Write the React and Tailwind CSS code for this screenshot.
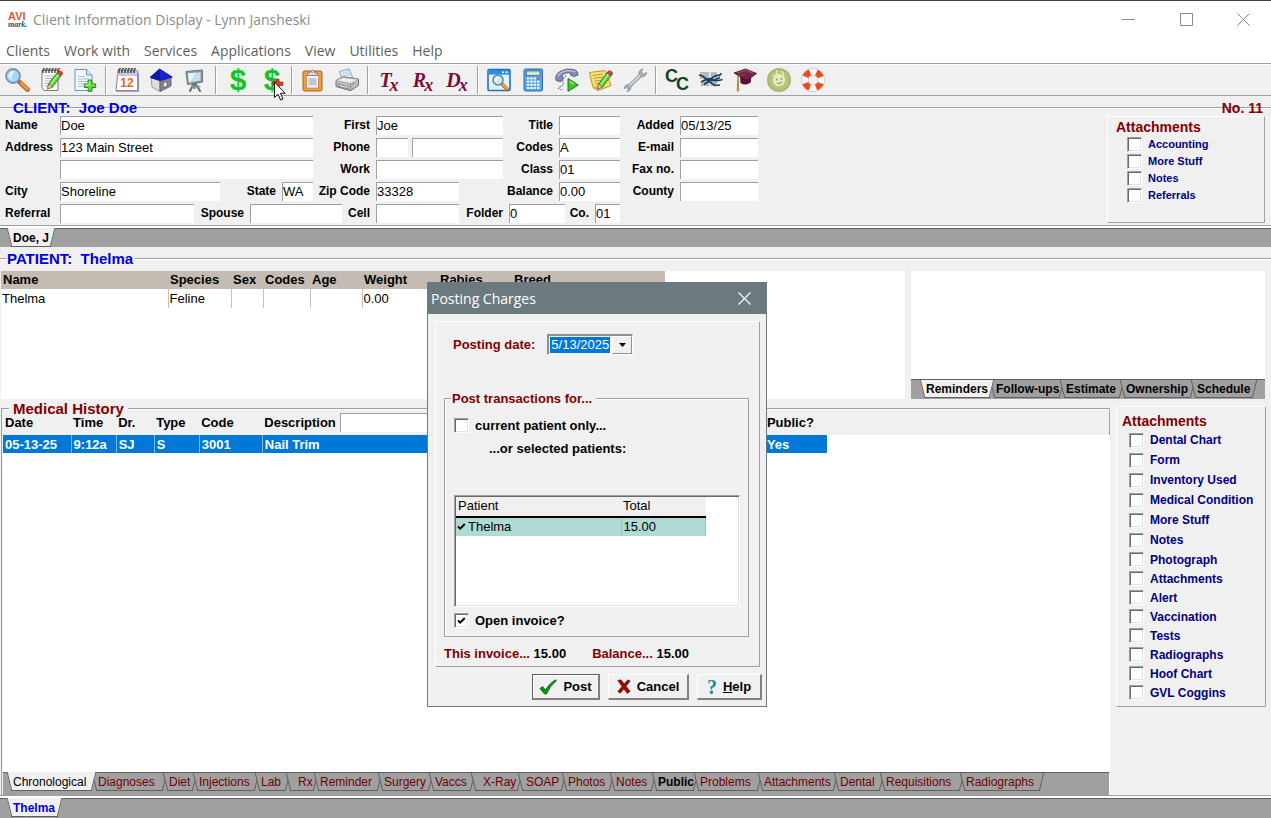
import React from "react";

const sunken = "border-t border-l border-[#a0a0a0] bg-white";
const raised = "border border-t-white border-l-white border-r-[#a0a0a0] border-b-[#a0a0a0]";

/* ---------- toolbar drawings ---------- */

function Icon({ children }) {
  return (
    <svg width="26" height="26" viewBox="0 0 26 26" aria-hidden="true">
      {children}
    </svg>
  );
}

function Pencil() {
  return (
    <g>
      <path d="M10.5 17 L19 5.8 L23 8.8 L14.6 20 L9.6 22 Z" fill="#5fd13c" stroke="#2f7d1c" strokeWidth="0.9" />
      <path d="M12.8 17.6 L20.6 7.2" stroke="#b8f09a" strokeWidth="1.3" />
      <path d="M19 5.8 L20.4 4 Q24.4 3.4 24.5 7 L23 8.8 Z" fill="#e0433a" stroke="#9b2a22" strokeWidth="0.8" />
      <path d="M10.5 17 L14.6 20 L9.6 22 Z" fill="#f3cf9b" stroke="#73562c" strokeWidth="0.6" />
    </g>
  );
}

function Lens({ big }) {
  return big ? (
    <g>
      <path d="M15.5 15 L23.5 22.5" stroke="#a85a1a" strokeWidth="4.6" strokeLinecap="round" />
      <path d="M16.2 15.2 L23.3 22" stroke="#f39a43" strokeWidth="2.8" strokeLinecap="round" />
      <path d="M13.8 13.8 L16 16" stroke="#777" strokeWidth="2.2" />
      <circle cx="9" cy="9" r="7" fill="#a9d6f2" stroke="#7b97a6" strokeWidth="1.8" />
      <path d="M4.5 9 A4.6 4.6 0 0 1 10.5 4.6 Q7 8 8 13 Q4.8 12 4.5 9Z" fill="#e2f3fc" />
    </g>
  ) : (
    <g>
      <path d="M16 17 L21.5 22.5" stroke="#b5621f" strokeWidth="3.6" strokeLinecap="round" />
      <path d="M16.6 17.2 L21.2 21.8" stroke="#f7a44d" strokeWidth="2" strokeLinecap="round" />
      <circle cx="12" cy="13" r="5" fill="#c8e8fa" stroke="#5f8396" strokeWidth="1.5" />
      <path d="M9 13 A3 3 0 0 1 13 10 L10 15 Z" fill="#fff" />
    </g>
  );
}

const Binding = ({ y = 4, color = "#333" }) => (
  <g fill="none" stroke={color} strokeWidth="1.2">
    {[5, 8, 11, 14, 17, 20].map((x) => (
      <path key={x} d={`M${x} ${y + 3} v-3 q0 -1.6 1.8 -1.2`} />
    ))}
  </g>
);

const drawings = {
  search: <Lens big />,
  notepad: (
    <g>
      <path d="M4 3.5 H20 V23.5 H6.5 L4 21 Z" fill="#fff" stroke="#777" />
      <path d="M6.5 9 H17 M6.5 11.5 H17 M6.5 14 H14 M6.5 16.5 H13 M6.5 19 H11" stroke="#9fb6c6" />
      <Binding y={3} />
      <Pencil />
    </g>
  ),
  newDoc: (
    <g>
      <path d="M3 2.5 H14.5 L20 8 V23.5 H3 Z" fill="#f4f9fd" stroke="#6e94b5" />
      <path d="M14.5 2.5 V8 H20" fill="#cfe2f1" stroke="#6e94b5" />
      <path d="M6 9.5 H13 M6 12 H17 M6 14.5 H17 M6 17 H12 M6 19.5 H11" stroke="#a9bfd0" />
      <path d="M16.2 13 H19.8 V16.9 H23.7 V20.5 H19.8 V24.4 H16.2 V20.5 H12.3 V16.9 H16.2 Z" fill="#6adb3c" stroke="#2b8a16" />
      <path d="M17.3 14.4 V18 H13.6" stroke="#c5f7a8" fill="none" />
    </g>
  ),
  calendar: (
    <g>
      <path d="M4 3.5 H24 V23.5 H2 Z" fill="#fff" stroke="#7c7c9c" />
      <path d="M4 3.5 H24 V9 H3.4 Z" fill="#c6c6dc" />
      <path d="M2 23.8 H24 V6" fill="none" stroke="#8a8aae" strokeWidth="1.8" />
      <Binding y={3} color="#222" />
      <text x="13" y="20" textAnchor="middle" fontSize="12" fontWeight="700" fill="#f0640a" className="font-['Liberation_Sans',Arial,sans-serif]">12</text>
    </g>
  ),
  house: (
    <g>
      <path d="M3 10 L12 14.5 V24.5 L4 20 Z" fill="#dedee4" stroke="#888" strokeWidth="0.8" />
      <path d="M12 14.5 L23 10 V19 L12 24.5 Z" fill="#85858d" stroke="#555" strokeWidth="0.8" />
      <path d="M15.4 16 L19 14.5 V19 L15.4 20.6 Z" fill="#f5f5f5" stroke="#444" strokeWidth="0.6" />
      <path d="M2 10.4 L11.6 2 L24.3 10 L12.2 13.6 Z" fill="#1622dc" stroke="#0d1272" strokeWidth="0.8" />
      <path d="M11.6 2 L12.2 13.6 L2 10.4 Z" fill="#0d17a8" />
    </g>
  ),
  screen: (
    <g>
      <path d="M12 16 L8 24 M13 16 L18 24 M12.5 15 V21" stroke="#6d7478" strokeWidth="2.2" strokeLinecap="round" />
      <path d="M4 4.5 L20.5 3 V15 L5.5 17.5 Z" fill="#8d989e" stroke="#69747a" />
      <path d="M6 6.4 L18.5 5.2 V13.4 L7 15.4 Z" fill="#c3def2" />
      <path d="M6 6.4 L14 5.6 L8 15 L7 15.4Z" fill="#e8f4fc" />
      <path d="M9 18.5 h8 l2 1.8 h-9 z" fill="#8b9398" />
    </g>
  ),
  clipboard: (
    <g>
      <rect x="3" y="4" width="19" height="20" rx="1.5" fill="#eda03c" stroke="#a5651a" />
      <path d="M6.5 8 H18.5 V21 H6.5 Z" fill="#f6f6fb" stroke="#b9874e" strokeWidth="0.8" />
      <path d="M8.5 11 H16.5 V18.5 H8.5 Z" fill="#c3c5d6" />
      <path d="M7.5 8.5 V6.4 L10.5 5.4 A2.2 3.2 0 0 1 14.7 5.4 L17.5 6.4 V8.5 Z" fill="#dcdce0" stroke="#777" strokeWidth="0.9" />
      <circle cx="12.6" cy="4.6" r="1" fill="#fff" stroke="#777" strokeWidth="0.6" />
    </g>
  ),
  printer: (
    <g>
      <path d="M8 12 L5.5 4.5 L15 2 L19 11 Z" fill="#dcedf9" stroke="#8b9aa5" strokeWidth="0.9" />
      <path d="M8 6.5 L14.5 4.8 M9 9 L15.5 7.3" stroke="#b8cad6" />
      <path d="M2 13.5 L9 9.8 L24.5 12 V18.5 L16.5 23.8 L2 19.5 Z" fill="#bdbdbd" stroke="#666" strokeWidth="0.9" />
      <path d="M2 13.5 L9 10.4 L24.5 12.4 L16.5 16.4 Z" fill="#ececec" stroke="#999" strokeWidth="0.6" />
      <path d="M16.5 16.4 V23.8" stroke="#888" />
      <path d="M4.5 17.2 L14 19.6 V21.6 L4.5 19 Z" fill="#f8f8f8" stroke="#555" strokeWidth="0.6" />
      <path d="M18.5 17.4 l2 -1" stroke="#55c134" strokeWidth="1.6" />
    </g>
  ),
  preview: (
    <g>
      <rect x="2" y="2.5" width="22" height="21" rx="1" fill="#e4f1fc" stroke="#1d73c4" strokeWidth="1.6" />
      <rect x="2" y="3" width="21.5" height="4.6" fill="#2d8be0" />
      <path d="M16 5.3 h2 M19.5 5.3 h2" stroke="#fff" strokeWidth="1.5" />
      <Lens />
    </g>
  ),
  calculator: (
    <g>
      <rect x="4" y="2" width="18.5" height="22" rx="1.4" fill="#5ba4e4" stroke="#2c6cab" />
      <rect x="6.5" y="4" width="13.5" height="4.6" fill="#d2e9c8" stroke="#2b5f92" strokeWidth="0.7" />
      {[11, 14.2, 17.4, 20.6].map((y) =>
        [6.8, 10.2, 13.6, 17].map((x) => (
          <rect key={`${x}-${y}`} x={x} y={y - 0.6} width="2.5" height="2" fill={x === 17 && y < 12 ? "#e4593c" : "#f2f8ff"} />
        ))
      )}
    </g>
  ),
  phone: (
    <g>
      <path d="M2 13.5 Q0.5 8 6 4.5 Q12 0.8 19 2.4 Q24.5 3.8 24 8 L20 9.6 L16.5 8 L16.8 6 Q11 5 7.8 8.8 L9.3 10.8 L7 14.8 Z" fill="#8688b8" stroke="#55577f" strokeWidth="0.9" />
      <path d="M3.8 9 Q7 4 14 3.6 Q19 3.4 21.5 5" stroke="#c5c7e4" fill="none" strokeWidth="1.4" />
      <path d="M12 9 Q8 12 9 15 T6 20 T9 23" fill="none" stroke="#6b6d96" strokeWidth="1.2" strokeDasharray="1.5 1" />
      <path d="M14 11.5 L24.3 18 L14 24.3 Z" fill="#3fc32c" stroke="#1d7a13" />
      <path d="M15.5 14.4 L20 17.3" stroke="#aef09c" strokeWidth="1.2" />
    </g>
  ),
  sticky: (
    <g>
      <path d="M1.5 5.5 L17 3.5 L23 18.5 L10 23.5 L5 20.5 Z" fill="#f7e26c" stroke="#b6932c" />
      <path d="M10 23.5 L8 18.7 L5 20.5 Z" fill="#d3b63e" />
      <path d="M4.5 8.5 L15 7 M5.4 11.4 L15 10 M6.3 14.3 L13 13.2 M7 17 L12 16" stroke="#b79b3c" />
      <Pencil />
    </g>
  ),
  wrench: (
    <g>
      <path d="M2 21.5 Q2.5 17.6 6.8 17.4 L16.8 7.8 Q16 3.6 20.6 1.8 L19.4 5 L21.6 7 L24.8 5.6 Q23.6 10.2 19 10 L9.2 19.6 Q9 23.8 5 24.8 L6.4 22.6 L4.6 20.6 Z" fill="#a4adb5" stroke="#8d969e" strokeWidth="0.9" />
      <path d="M7.6 18.4 L18 8.6" stroke="#e2e8ec" strokeWidth="1.3" />
    </g>
  ),
  lab: (
    <g>
      <path d="M2 5 H11 V12 H2 Z M12.5 5 H19 V11 H12.5 Z M3 14 H11 V19 H3 Z M12.5 13 H19 V19 H12.5 Z" fill="#b4babf" />
      <path d="M1 8 Q5 8.5 8 12 M3 15 Q8 11.5 13 12.6 Q19 14.5 24.5 12.5 M8 12 Q13 16 17 18.5 L22 18 M13 12 Q17 8 21 8.5 L23.5 6.5 M16 13 L22 10.5 M6 17.5 L12 13.5" fill="none" stroke="#1b3f66" strokeWidth="1.7" />
      <path d="M9 11.5 Q13 9.8 17 12.4 Q14 15.4 10 13.6Z" fill="#1b3f66" />
    </g>
  ),
  gradCap: (
    <g>
      <path d="M8 8.5 L8.5 16 Q14 19.6 19 15 V9 Z" fill="#571232" />
      <path d="M2 6 L13.5 2 L24.5 6.5 L15 13.6 Z" fill="#7b2148" stroke="#451027" strokeWidth="0.8" />
      <path d="M5 6.2 L13.5 3.2 L21 6.2" stroke="#a3527a" fill="none" />
      <path d="M13.5 7 L6 9 V17" stroke="#6a5a2a" fill="none" strokeWidth="1" />
      <path d="M5 13.5 h1.8 l0.4 11 h-2.4 z" fill="#b98d4a" />
    </g>
  ),
  pet: (
    <g>
      <circle cx="13" cy="13" r="12" fill="#a9b86a" />
      <circle cx="13" cy="13" r="10" fill="#b7c57a" />
      <path d="M8 9.5 Q5.4 6 9.4 8 Q14 5.6 17.6 9 Q20.6 12.4 17.8 17 Q13.6 20.8 9 18 Q5.6 14 8 9.5Z" fill="#e6edc2" />
      <path d="M11.5 3.6 Q9 6 11.5 7.6 M15.5 4 q2.6 2 1.6 4.6" stroke="#e6edc2" strokeWidth="1.5" fill="none" />
      <circle cx="10.8" cy="12.4" r="1" fill="#93a14f" />
      <circle cx="15.4" cy="11.8" r="1" fill="#93a14f" />
      <path d="M10.8 15.6 Q13.6 17.8 16 14.8" fill="none" stroke="#93a14f" strokeWidth="1.2" />
    </g>
  ),
  lifebuoy: (
    <g>
      <circle cx="13" cy="13" r="8.2" fill="none" stroke="#b4b4b4" strokeWidth="7.2" />
      <circle cx="13" cy="13" r="8.2" fill="none" stroke="#fafafa" strokeWidth="6.2" />
      <circle cx="13" cy="13" r="8.2" fill="none" stroke="#ee4b1c" strokeWidth="6.2" strokeDasharray="6.44 6.44" strokeDashoffset="-3.2" />
    </g>
  ),
};

function Dollar() {
  return <span className="block pl-0.5 text-3xl leading-7 font-bold text-[#0cc81a]">$</span>;
}

function Rx({ letter }) {
  return (
    <span className="block font-['Liberation_Serif',serif] text-xl leading-6 font-bold text-[#800a37] italic">
      {letter}
      <sub className="-ml-0.5 text-lg leading-none">x</sub>
    </span>
  );
}

function Tool({ name, children }) {
  return (
    <button type="button" aria-label={name} className="flex h-[30px] w-[34px] shrink-0 items-center justify-center">
      {children}
    </button>
  );
}

function Separator() {
  return (
    <span className="flex h-7 w-2 shrink-0 justify-center">
      <span className="w-px bg-[#a0a0a0]" />
      <span className="w-px bg-white" />
    </span>
  );
}

const toolGroups = [
  ["search", "notepad", "newDoc"],
  ["calendar", "house", "screen"],
  ["dollar", "dollarPost"],
  ["clipboard", "printer"],
  ["T", "R", "D"],
  ["preview", "calculator", "phone", "sticky", "wrench"],
  ["CC", "lab", "gradCap", "pet", "lifebuoy"],
];

function ToolFace({ name }) {
  if (name === "dollar") return <Dollar />;
  if (name === "dollarPost")
    return (
      <span className="relative">
        <Dollar />
        <svg className="absolute top-3 left-2" width="18" height="24" viewBox="0 0 18 24" aria-hidden="true">
          <path d="M2 4 h4 V1 h3 V4 h4 V7.5 H2 Z" fill="#d8401c" stroke="#8b2a10" strokeWidth="0.6" />
          <path d="M4.5 4 V19.5 L8 16.2 L10.6 22 L13 21 L10.4 15.3 H15.2 Z" fill="#fff" stroke="#111" strokeWidth="1" />
        </svg>
      </span>
    );
  if (name.length === 1) return <Rx letter={name} />;
  if (name === "CC")
    return (
      <span className="flex text-lg leading-none font-bold text-[#0d4220]">
        <span className="pb-2">C</span>
        <span className="-ml-0.5 pt-2">C</span>
      </span>
    );
  return <Icon>{drawings[name]}</Icon>;
}

function Toolbar() {
  return (
    <div role="toolbar" className="flex h-[33px] items-center border-t border-b border-[#a0a0a0] shadow-[inset_0_1px_0_#fff]">
      {toolGroups.map((group, i) => (
        <React.Fragment key={i}>
          {i > 0 && <Separator />}
          {group.map((name) => (
            <Tool key={name} name={name}>
              <ToolFace name={name} />
            </Tool>
          ))}
        </React.Fragment>
      ))}
    </div>
  );
}

/* ---------- shared controls ---------- */

function CheckBox({ id, checked }) {
  return (
    <span className="relative flex h-[15px] w-[15px] shrink-0">
      <input
        id={id}
        type="checkbox"
        defaultChecked={checked}
        className="peer m-0 h-[15px] w-[15px] appearance-none border border-t-[#a0a0a0] border-r-white border-b-white border-l-[#a0a0a0] bg-white shadow-[inset_1px_1px_0_#696969,inset_-1px_-1px_0_#e3e3e3]"
      />
      <svg className="pointer-events-none absolute top-1 left-[3px] hidden peer-checked:block" width="9" height="8" viewBox="0 0 9 8" aria-hidden="true">
        <path d="M1 3.4 L3.2 5.6 L7.8 1" fill="none" stroke="#000" strokeWidth="2" />
      </svg>
    </span>
  );
}

function Tab({ label, width, pad = "pl-1", tone = "", active }) {
  return (
    <button
      type="button"
      role="tab"
      aria-selected={!!active}
      className={`relative h-[18px] shrink-0 text-left leading-4 whitespace-nowrap before:absolute before:inset-y-0 before:left-0 before:w-3/5 before:skew-x-[14deg] before:border-b before:border-l before:border-[#606060] after:absolute after:inset-y-0 after:right-0 after:w-3/5 after:-skew-x-[14deg] after:border-r after:border-b after:border-[#606060] ${
        active
          ? "z-10 before:-top-px before:bg-[#f0f0f0] after:-top-px after:bg-[#f0f0f0]"
          : "before:bg-[#a0a0a0] after:bg-[#a0a0a0]"
      } ${width} ${pad} ${tone}`}
    >
      <span className="relative z-10">{label}</span>
    </button>
  );
}

function Strip({ children, className = "" }) {
  return (
    <div role="tablist" className={`flex items-start border-t border-[#606060] bg-[#a0a0a0] ${className}`}>
      {children}
    </div>
  );
}

/* ---------- client form ---------- */

function Field({ id, label, labelWidth, width, value = "", start }) {
  return (
    <>
      <label htmlFor={id} className={`${labelWidth} ${start ? "pl-[5px]" : "pr-1.5 text-right"} shrink-0 text-xs leading-[19px] font-bold whitespace-nowrap`}>
        {label}
      </label>
      <input id={id} defaultValue={value} className={`${sunken} ${width} h-[19px] shrink-0 text-[13px]`} />
    </>
  );
}

function ClientForm() {
  return (
    <form className="grid gap-[3px]">
      <div className="flex">
        <Field id="name" label="Name" labelWidth="w-[60px]" width="w-[253px]" value="Doe" start />
        <Field id="first" label="First" labelWidth="w-[63px]" width="w-[127px]" value="Joe" />
        <Field id="title" label="Title" labelWidth="w-14" width="w-[61px]" />
        <Field id="added" label="Added" labelWidth="w-[60px]" width="w-[78px]" value="05/13/25" />
      </div>
      <div className="flex">
        <Field id="address" label="Address" labelWidth="w-[60px]" width="w-[253px]" value="123 Main Street" start />
        <Field id="phone" label="Phone" labelWidth="w-[63px]" width="w-8" />
        <input aria-label="Phone number" className={`${sunken} ml-1 h-[19px] w-[91px] shrink-0`} />
        <Field id="codes" label="Codes" labelWidth="w-14" width="w-[61px]" value="A" />
        <Field id="email" label="E-mail" labelWidth="w-[60px]" width="w-[78px]" />
      </div>
      <div className="flex">
        <Field id="address2" label="" labelWidth="w-[60px]" width="w-[253px]" start />
        <Field id="work" label="Work" labelWidth="w-[63px]" width="w-[127px]" />
        <Field id="class" label="Class" labelWidth="w-14" width="w-[61px]" value="01" />
        <Field id="fax" label="Fax no." labelWidth="w-[60px]" width="w-[78px]" />
      </div>
      <div className="flex">
        <Field id="city" label="City" labelWidth="w-[60px]" width="w-40" value="Shoreline" start />
        <Field id="state" label="State" labelWidth="w-[62px]" width="w-[31px]" value="WA" />
        <Field id="zip" label="Zip Code" labelWidth="w-[63px]" width="w-[83px]" value="33328" />
        <Field id="balance" label="Balance" labelWidth="w-[100px]" width="w-[61px]" value="0.00" />
        <Field id="county" label="County" labelWidth="w-[60px]" width="w-[78px]" />
      </div>
      <div className="flex">
        <Field id="referral" label="Referral" labelWidth="w-[60px]" width="w-[134px]" start />
        <Field id="spouse" label="Spouse" labelWidth="w-14" width="w-[92px]" />
        <Field id="cell" label="Cell" labelWidth="w-[34px]" width="w-[83px]" />
        <Field id="folder" label="Folder" labelWidth="w-[50px]" width="w-14" value="0" />
        <Field id="co" label="Co." labelWidth="w-[30px]" width="w-[25px]" value="01" />
      </div>
    </form>
  );
}

const clientAttachments = ["Accounting", "More Stuff", "Notes", "Referrals"];
const attachmentsUpper = ["Dental Chart", "Form", "Inventory Used", "Medical Condition", "More Stuff", "Notes"];
const attachmentsLower = ["Photograph", "Attachments", "Alert", "Vaccination", "Tests", "Radiographs", "Hoof Chart", "GVL Coggins"];

function AttachmentRow({ scope, label, className }) {
  const id = `${scope}-${label.replace(/ /g, "-")}`;
  return (
    <li className={`flex items-center gap-1.5 font-bold text-[#000080] ${className}`}>
      <CheckBox id={id} />
      <label htmlFor={id} className="whitespace-nowrap">{label}</label>
    </li>
  );
}

function ClientSection() {
  return (
    <section className="pt-1 pb-0.5">
      <div className="relative flex h-4 items-center justify-between pr-2 pl-[13px] font-bold before:absolute before:inset-x-0 before:top-[7px] before:h-0.5 before:border-t before:border-[#a0a0a0] before:bg-white">
        <h1 className="relative text-[15px] text-[#0000e0]">CLIENT:&nbsp; Joe Doe</h1>
        <span className="relative text-sm text-[#800000]">No. 11</span>
      </div>
      <div className="flex justify-between">
        <ClientForm />
        <div className={`${raised} mr-1.5 w-[158px] pt-0.5 pl-2`}>
          <h2 className="text-sm leading-[17px] font-bold text-[#800000]">Attachments</h2>
          <ul className="pl-[11px] text-[11px]">
            {clientAttachments.map((label) => (
              <AttachmentRow key={label} scope="client" label={label} className="h-[17px]" />
            ))}
          </ul>
        </div>
      </div>
    </section>
  );
}

/* ---------- patient ---------- */

const patientColumns = [
  ["Name", "w-[167px]", "Thelma"],
  ["Species", "w-[63px]", "Feline"],
  ["Sex", "w-8", ""],
  ["Codes", "w-[47px]", ""],
  ["Age", "w-[52px]", ""],
  ["Weight", "w-[76px]", "0.00"],
  ["Rabies", "w-[74px]", ""],
  ["Breed", "w-[153px]", ""],
];

function PatientSection() {
  return (
    <section>
      <div className="flex h-6 items-center text-[15px] font-bold text-[#0000e0]">
        <span className="h-0.5 w-[7px] border-t border-[#a0a0a0] bg-white" />
        <h2 className="pr-0.5 whitespace-nowrap">PATIENT:&nbsp; Thelma</h2>
        <span className="h-0.5 flex-1 border-t border-[#a0a0a0] bg-white" />
      </div>
      <div className="flex h-32 gap-1.5 pr-1.5 pl-px">
        <div className="min-w-0 flex-[904] bg-white">
          <table className="w-[664px] table-fixed border-collapse text-left text-[13px] leading-[18px]">
            <thead className="bg-[#c4bbb2]">
              <tr>
                {patientColumns.map(([head, width]) => (
                  <th key={head} className={`${width} p-0 pl-0.5 font-bold`}>{head}</th>
                ))}
              </tr>
            </thead>
            <tbody>
              <tr className="h-[19px]">
                {patientColumns.map(([head, , value], i) => (
                  <td key={head} className={`p-0 pl-px ${i > 0 && i < 6 ? "border-l border-[#c0c0c0]" : ""}`}>{value}</td>
                ))}
              </tr>
            </tbody>
          </table>
        </div>
        <div className="flex min-w-0 flex-[354] flex-col">
          <div className="flex-1 bg-white" />
          <Strip className="h-5 overflow-hidden pl-[11px] text-xs font-bold">
            <Tab active label="Reminders" width="w-[70px]" />
            <Tab label="Follow-ups" width="w-[70px]" />
            <Tab label="Estimate" width="w-[60px]" />
            <Tab label="Ownership" width="w-[71px]" />
            <Tab label="Schedule" width="w-[62px]" />
          </Strip>
        </div>
      </div>
    </section>
  );
}

/* ---------- medical history ---------- */

const historyColumns = [
  ["Date", "w-[68px]", "05-13-25"],
  ["Time", "w-[45px]", "9:12a"],
  ["Dr.", "w-[38px]", "SJ"],
  ["Type", "w-[45px]", "S"],
  ["Code", "w-[63px]", "3001"],
  ["Description", "w-[502px]", "Nail Trim"],
  ["Public?", "w-[62px]", "Yes"],
];

const historyTabs = [
  ["Chronological", "w-[85px]"],
  ["Diagnoses", "w-[71px]"],
  ["Diet", "w-[30px]"],
  ["Injections", "w-[62px]"],
  ["Lab", "w-[31px]"],
  ["Rx", "w-7", "pl-2.5"],
  ["Reminder", "w-16"],
  ["Surgery", "w-[51px]"],
  ["Vaccs", "w-[42px]"],
  ["X-Ray", "w-[47px]", "pl-2.5"],
  ["SOAP", "w-11", "pl-1.5"],
  ["Photos", "w-[48px]"],
  ["Notes", "w-[42px]"],
  ["Public", "w-[42px]"],
  ["Problems", "w-16"],
  ["Attachments", "w-[76px]"],
  ["Dental", "w-[46px]"],
  ["Requisitions", "w-20"],
  ["Radiographs", "w-20"],
];

function HistorySection() {
  return (
    <section className="flex flex-1 gap-1.5 pt-2 pr-[5px]">
      <div className="relative mt-px ml-px flex min-w-0 flex-1 flex-col border-t border-l border-[#a0a0a0] pl-px">
        <h2 className="absolute -top-2 left-[7px] bg-[#f0f0f0] px-1 text-[15px] leading-4 font-bold text-[#800000]">Medical History</h2>
        <div className="flex flex-1 flex-col bg-white">
          <div className="border-t border-r border-t-white border-r-[#a0a0a0] bg-[#f0f0f0]">
            <div className="h-[25px]">
              <table className="relative w-[824px] table-fixed border-collapse text-left text-[13px] font-bold">
                <thead>
                  <tr className="h-[25px]">
                    {historyColumns.map(([head, width]) => (
                      <th key={head} className={`${width} p-0 pl-0.5`}>
                        {head === "Description" ? (
                          <span className="flex items-center gap-1">
                            <label htmlFor="find">{head}</label>
                            <input id="find" className={`${sunken} h-[19px] w-80`} />
                          </span>
                        ) : (
                          head
                        )}
                      </th>
                    ))}
                  </tr>
                </thead>
                <tbody>
                  <tr className="h-[18px] bg-[#0078d7] leading-[17px] text-white">
                    {historyColumns.map(([head, , value], i) => (
                      <td key={head} className={`p-0 pl-0.5 ${i > 0 && i < 6 ? "border-l border-[#7db8e8]" : ""}`}>{value}</td>
                    ))}
                  </tr>
                </tbody>
              </table>
            </div>
          </div>
          <div className="flex-1" />
          <Strip className="h-[23px] border-r border-r-white pl-1.5 text-xs text-[#700000]">
            {historyTabs.map(([label, width, pad], i) => (
              <Tab
                key={label}
                label={label}
                width={width}
                pad={pad}
                active={i === 0}
                tone={i === 0 ? "text-black" : label === "Public" ? "font-bold text-black" : ""}
              />
            ))}
          </Strip>
        </div>
      </div>
      <aside className={`${raised} -mt-px w-[150px] self-start pt-[5px] pb-1 pl-[5px]`}>
        <h2 className="text-sm leading-[18px] font-bold text-[#800000]">Attachments</h2>
        <ul className="pl-[7px] text-xs">
          {attachmentsUpper.map((label) => (
            <AttachmentRow key={label} scope="patient" label={label} className="h-5" />
          ))}
          {attachmentsLower.map((label) => (
            <AttachmentRow key={label} scope="patient" label={label} className="h-[19px]" />
          ))}
        </ul>
      </aside>
    </section>
  );
}

/* ---------- dialog ---------- */

function PushButton({ children, width, isDefault }) {
  return (
    <button
      type="button"
      className={`${width} flex h-[26px] items-center justify-center gap-1.5 border-t border-r-2 border-b-2 border-l border-r-[#808080] border-b-[#808080] bg-[#f0f0f0] pt-px text-[13px] font-bold ${
        isDefault ? "border-t-[#606060] border-l-[#606060] shadow-[inset_1px_1px_0_#fff]" : "border-t-white border-l-white"
      }`}
    >
      {children}
    </button>
  );
}

function PostingDialog() {
  return (
    <div role="dialog" aria-label="Posting Charges" className="absolute top-[282px] left-[427px] z-20 w-[340px] border border-[#6b7a7f] bg-[#f0f0f0] pb-1.5 text-[13px]">
      <header className="flex h-[31px] items-center justify-between bg-[#6b7a7f] pr-[15px] pl-[3px] text-white">
        <h2 className="font-['Open_Sans','Noto_Sans',sans-serif] text-sm">Posting Charges</h2>
        <button type="button" aria-label="Close">
          <svg width="13" height="13" viewBox="0 0 13 13" aria-hidden="true">
            <path d="M0.5 0.5 L12.5 12.5 M12.5 0.5 L0.5 12.5" stroke="#fff" strokeWidth="1.1" />
          </svg>
        </button>
      </header>
      <div className={`${raised} mt-[7px] mr-1.5 ml-[7px] pt-3 pr-2.5 pb-1 pl-2`}>
        <div className="flex items-center gap-3 pl-[9px]">
          <label htmlFor="posting-date" className="font-bold text-[#800000]">Posting date:</label>
          <span className="flex h-[21px] w-[86px] border-t-2 border-r border-b border-l-2 border-t-[#909090] border-r-white border-b-white border-l-[#909090] bg-[#f0f0f0]">
            <input
              id="posting-date"
              defaultValue="5/13/2025"
              className="my-px ml-px h-4 w-[60px] bg-[#0078d7] pl-px text-[13px] text-white"
            />
            <button type="button" aria-label="Choose date" className="ml-auto flex w-5 items-center justify-center border border-t-white border-r-[#909090] border-b-[#909090] border-l-white">
              <svg width="7" height="4" viewBox="0 0 7 4" aria-hidden="true"><path d="M0 0 H7 L3.5 4 Z" /></svg>
            </button>
          </span>
        </div>
        <div className="relative mt-[43px] border border-[#a0a0a0] px-[9px] pt-[17px] pb-[7px] shadow-[inset_1px_1px_0_#fff]">
          <h3 className="absolute -top-2 left-1.5 bg-[#f0f0f0] px-px pr-1 leading-4 font-bold text-[#800000]">Post transactions for...</h3>
          <div className="flex items-center gap-1.5 font-bold">
            <CheckBox id="current-only" />
            <label htmlFor="current-only">current patient only...</label>
          </div>
          <p className="mt-[5px] pl-[35px] leading-4 font-bold">...or selected patients:</p>
          <div className="mt-[38px] h-28 w-[286px] border border-t-[#a0a0a0] border-r-white border-b-white border-l-[#a0a0a0] bg-white p-px shadow-[inset_1px_1px_0_#696969,inset_-1px_-1px_0_#e3e3e3]">
            <table className="w-[250px] table-fixed border-collapse text-left leading-[18px]">
              <thead className="border-b-2 border-black bg-[#f0f0f0]">
                <tr className="h-5">
                  <th className="w-[165px] p-0 pl-0.5 font-normal">Patient</th>
                  <th className="p-0 pl-0.5 font-normal">Total</th>
                </tr>
              </thead>
              <tbody>
                <tr className="bg-[#b0dbd5]">
                  <td className="p-0">
                    <span className="flex items-center gap-0.5 pl-px">
                      <svg width="9" height="8" viewBox="0 0 9 8" aria-hidden="true">
                        <path d="M1 3.4 L3.2 5.6 L7.8 1" fill="none" stroke="#000" strokeWidth="2" />
                      </svg>
                      Thelma
                    </span>
                  </td>
                  <td className="border-x border-[#a8bdba] p-0 pl-0.5">15.00</td>
                </tr>
              </tbody>
            </table>
          </div>
          <div className="mt-1.5 flex items-center gap-1.5 leading-4 font-bold">
            <CheckBox id="open-invoice" checked />
            <label htmlFor="open-invoice">Open invoice?</label>
          </div>
        </div>
        <p className="mt-[9px] flex gap-[26px] leading-4 font-bold">
          <span><span className="text-[#800000]">This invoice...</span> 15.00</span>
          <span><span className="text-[#800000]">Balance...</span> 15.00</span>
        </p>
      </div>
      <footer className="mt-[7px] flex justify-end gap-2 pr-1">
        <PushButton width="w-[68px]" isDefault>
          <svg width="18" height="16" viewBox="0 0 18 16" aria-hidden="true">
            <path d="M1 9.5 L3.6 7.6 L6.4 11 Q10.5 4.4 16.6 0.8 L17.2 1.8 Q11 7 7.4 15 H5.6 Z" fill="#089a17" stroke="#064d0c" strokeWidth="0.8" />
          </svg>
          Post
        </PushButton>
        <PushButton width="w-[81px]">
          <svg width="14" height="15" viewBox="0 0 14 15" aria-hidden="true">
            <path d="M0.8 1.6 L4 0.8 L7.2 4.8 L11 0.8 L13.2 2 L9 7.2 L13.2 12.2 L10.4 14.4 L6.8 10 L3.2 14.2 L0.8 12.6 L5 7.4 Z" fill="#a00808" stroke="#5c0404" strokeWidth="0.6" />
          </svg>
          Cancel
        </PushButton>
        <PushButton width="w-[65px]">
          <span aria-hidden="true" className="font-['Liberation_Serif',serif] text-xl leading-none text-[#08909c]">?</span>
          <span><span className="underline">H</span>elp</span>
        </PushButton>
      </footer>
    </div>
  );
}

/* ---------- window ---------- */

function TitleBar() {
  return (
    <header className="flex h-[38px] items-center border-t border-[#404040] bg-white pl-2 font-['Open_Sans','Noto_Sans',sans-serif] text-[#8c8c8c]">
      <span aria-hidden="true" className="mr-1 flex w-[21px] flex-col font-['Liberation_Sans',Arial,sans-serif] font-bold">
        <span className="text-[11px] leading-[9px] text-[#e0562e]">AVI</span>
        <span className="font-['Liberation_Serif',serif] text-[8px] leading-[7px] text-[#1f4e80] italic">mark.</span>
      </span>
      <span className="text-sm">Client Information Display - Lynn Jansheski</span>
      <div className="ml-auto flex">
        <button type="button" aria-label="Minimize" className="flex h-8 w-[58px] items-center justify-center">
          <svg width="13" height="13" viewBox="0 0 13 13" aria-hidden="true"><path d="M0 6.5 H13" stroke="#8a8a8a" /></svg>
        </button>
        <button type="button" aria-label="Maximize" className="flex h-8 w-[58px] items-center justify-center">
          <svg width="13" height="13" viewBox="0 0 13 13" aria-hidden="true"><path d="M0.5 0.5 H12.5 V12.5 H0.5 Z" fill="none" stroke="#8a8a8a" /></svg>
        </button>
        <button type="button" aria-label="Close window" className="flex h-8 w-14 items-center justify-center">
          <svg width="13" height="13" viewBox="0 0 13 13" aria-hidden="true"><path d="M0.5 0.5 L12.5 12.5 M12.5 0.5 L0.5 12.5" stroke="#8a8a8a" /></svg>
        </button>
      </div>
    </header>
  );
}

const menus = ["Clients", "Work with", "Services", "Applications", "View", "Utilities", "Help"];

export default function App() {
  return (
    <div className="relative flex min-h-screen flex-col overflow-x-hidden bg-[#f0f0f0] font-['Liberation_Sans',Arial,sans-serif] text-black">
      <TitleBar />
      <nav className="flex h-[25px] items-center gap-3.5 bg-white pl-1.5 font-['Open_Sans','Noto_Sans',sans-serif] text-sm text-[#606060]">
        {menus.map((menu) => (
          <button key={menu} type="button">{menu}</button>
        ))}
      </nav>
      <Toolbar />
      <ClientSection />
      <div className="h-[3px] border-t border-[#a0a0a0] bg-white" />
      <Strip className="h-[19px] pl-[9px] text-xs font-bold">
        <Tab active label="Doe, J" width="w-11" />
      </Strip>
      <PatientSection />
      <HistorySection />
      <div className="h-[3px] border-t border-[#a0a0a0] bg-white" />
      <Strip className="h-5 pl-[9px] text-xs font-bold text-[#0000e0]">
        <Tab active label="Thelma" width="w-[51px]" />
      </Strip>
      <PostingDialog />
    </div>
  );
}
